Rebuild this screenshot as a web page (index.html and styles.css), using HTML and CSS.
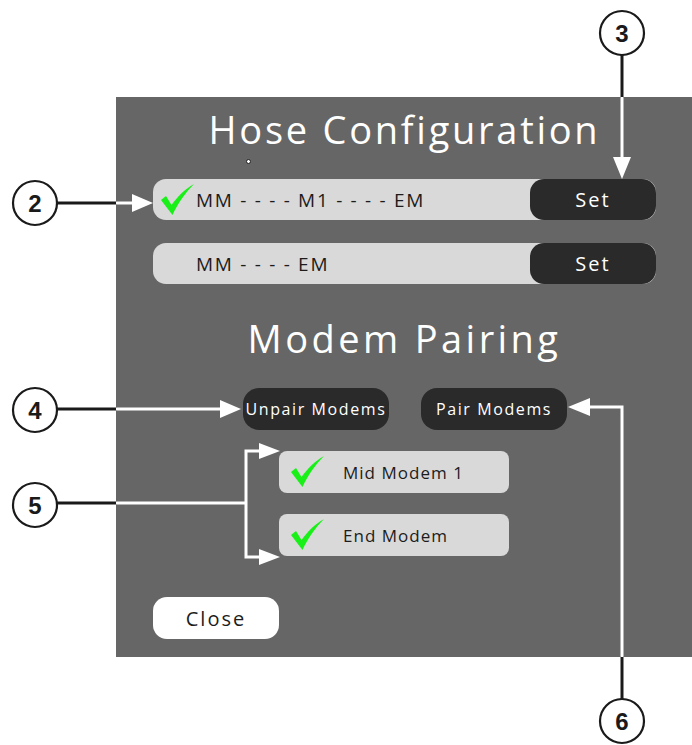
FILE: index.html
```html
<!DOCTYPE html>
<html lang="en">
<head>
    <meta charset="UTF-8">
    <meta name="viewport" content="width=device-width, initial-scale=1.0">
    <title>Hose Configuration</title>
    <link rel="stylesheet" href="styles.css">
</head>

<body>

    <div class="panel">
        <h1 class="title">Hose Configuration</h1>
        <span class="dot"></span>

        <div class="hose-row">
            <span class="hose-label">
                <svg class="tick" viewBox="0 0 34 32"><path d="M1 16 L6 12 L11.5 21 C18 12 25 5 34 0 C26 8 18 19 12.5 31 Z"/></svg>
                MM - - - - M1 - - - - EM
            </span>
            <button class="set-btn">Set</button>
        </div>

        <div class="hose-row">
            <span class="hose-label">
                <span class="tick-space"></span>
                MM - - - - EM
            </span>
            <button class="set-btn">Set</button>
        </div>

        <h1 class="title pairing">Modem Pairing</h1>

        <div class="pair-actions">
            <button class="dark-btn">Unpair Modems</button>
            <button class="dark-btn">Pair Modems</button>
        </div>

        <div class="modem-list">
            <div class="modem">
                <svg class="tick" viewBox="0 0 34 32"><path d="M1 16 L6 12 L11.5 21 C18 12 25 5 34 0 C26 8 18 19 12.5 31 Z"/></svg>
                <span>Mid Modem 1</span>
            </div>
            <div class="modem">
                <svg class="tick" viewBox="0 0 34 32"><path d="M1 16 L6 12 L11.5 21 C18 12 25 5 34 0 C26 8 18 19 12.5 31 Z"/></svg>
                <span>End Modem</span>
            </div>
        </div>

        <button class="close-btn">Close</button>
    </div>

    <!-- callouts -->
    <svg class="callouts" viewBox="0 0 692 745">
        <g class="lead-dark">
            <line x1="57" y1="203" x2="117" y2="203"/>
            <line x1="57" y1="409" x2="117" y2="409"/>
            <line x1="57" y1="503" x2="117" y2="503"/>
            <line x1="622" y1="55" x2="622" y2="98"/>
            <line x1="622" y1="699" x2="622" y2="656"/>
        </g>
        <g class="lead-light">
            <line x1="116" y1="203" x2="134" y2="203"/>
            <line x1="116" y1="409" x2="222" y2="409"/>
            <line x1="116" y1="503" x2="246" y2="503"/>
            <polyline points="261,451 246,451 246,557 261,557"/>
            <line x1="622" y1="97" x2="622" y2="158"/>
            <polyline points="622,657 622,407 588,407"/>
        </g>
        <g class="heads">
            <polygon points="132,194 153,203 132,212"/>
            <polygon points="220,400 241,409 220,418"/>
            <polygon points="259,443 280,451 259,459"/>
            <polygon points="259,549 280,557 259,565"/>
            <polygon points="613,157 622,179 631,157"/>
            <polygon points="590,398 568,407 590,416"/>
        </g>
        <g class="badge">
            <circle cx="35" cy="203" r="22"/>
            <text x="35" y="211.5">2</text>
        </g>
        <g class="badge">
            <circle cx="622" cy="33" r="22"/>
            <text x="622" y="41.5">3</text>
        </g>
        <g class="badge">
            <circle cx="35" cy="410" r="22"/>
            <text x="35" y="418.5">4</text>
        </g>
        <g class="badge">
            <circle cx="35" cy="505" r="22"/>
            <text x="35" y="513.5">5</text>
        </g>
        <g class="badge">
            <circle cx="622" cy="721" r="22"/>
            <text x="622" y="729.5">6</text>
        </g>
    </svg>

</body>
</html>
```

FILE: styles.css
```css
body {
    margin: 0;
    padding: 97px 0 0 116px;
    width: 692px;
    height: 745px;
    box-sizing: border-box;
    background-color: #fff;
    font-family: "Open Sans", sans-serif;
    position: relative;
    overflow: hidden;
}

.panel {
    position: relative;
    width: 576px;
    height: 560px;
    box-sizing: border-box;
    padding: 9px 36px 0 37px;
    background-color: #666;
}

.title {
    margin: 0;
    font-size: 38px;
    line-height: 46px;
    font-weight: 400;
    letter-spacing: 0.072em;
    color: #fff;
    text-align: center;
}

.title.pairing {
    margin-top: 31px;
    letter-spacing: 0.09em;
}

.dot {
    position: absolute;
    left: 130px;
    top: 62px;
    width: 3px;
    height: 3px;
    border: 1px solid #222;
    border-radius: 50%;
    background-color: #fff;
}

.hose-row {
    display: flex;
    align-items: stretch;
    height: 41px;
    margin-top: 27px;
    background-color: #d9d9d9;
    border-radius: 13px;
}

.hose-row + .hose-row {
    margin-top: 23px;
}

.hose-label {
    flex: 1;
    display: flex;
    align-items: center;
    gap: 2px;
    padding-left: 7px;
    font-size: 19px;
    letter-spacing: 0.09em;
    color: #1c1c1c;
}

.tick {
    width: 34px;
    height: 32px;
    fill: #18f018;
}

.tick-space {
    width: 34px;
}

button {
    font-family: inherit;
    border: none;
    padding: 0;
    cursor: pointer;
}

.set-btn {
    width: 126px;
    background-color: #2a2a2a;
    color: #fff;
    font-size: 20px;
    letter-spacing: 0.1em;
    border-radius: 14px;
}

.pair-actions {
    display: flex;
    justify-content: center;
    gap: 32px;
    margin-top: 27px;
    padding-left: 1px;
}

.dark-btn {
    width: 146px;
    height: 42px;
    background-color: #2a2a2a;
    color: #fff;
    font-size: 16px;
    letter-spacing: 0.1em;
    white-space: nowrap;
    border-radius: 16px;
}

.modem-list {
    display: flex;
    flex-direction: column;
    gap: 21px;
    margin-top: 21px;
    margin-left: 126px;
}

.modem {
    display: flex;
    align-items: center;
    width: 230px;
    height: 42px;
    box-sizing: border-box;
    padding-left: 11px;
    background-color: #d9d9d9;
    border-radius: 8px;
    font-size: 17px;
    letter-spacing: 0.06em;
    color: #1c1c1c;
}

.modem span {
    margin-left: 19px;
}

.close-btn {
    display: block;
    width: 126px;
    height: 42px;
    margin-top: 41px;
    background-color: #fff;
    color: #1c1c1c;
    font-size: 20px;
    letter-spacing: 0.1em;
    border-radius: 14px;
}

.callouts {
    position: absolute;
    left: 0;
    top: 0;
    width: 692px;
    height: 745px;
    pointer-events: none;
}

.lead-dark line {
    stroke: #1a1a1a;
    stroke-width: 3;
}

.lead-light line,
.lead-light polyline {
    stroke: #fff;
    stroke-width: 3;
    fill: none;
}

.heads polygon {
    fill: #fff;
}

.badge circle {
    fill: #fff;
    stroke: #1a1a1a;
    stroke-width: 2.2;
}

.badge text {
    font-family: "Liberation Sans Narrow", "Liberation Sans", sans-serif;
    font-weight: 700;
    font-size: 24px;
    fill: #1a1a1a;
    text-anchor: middle;
}
```
